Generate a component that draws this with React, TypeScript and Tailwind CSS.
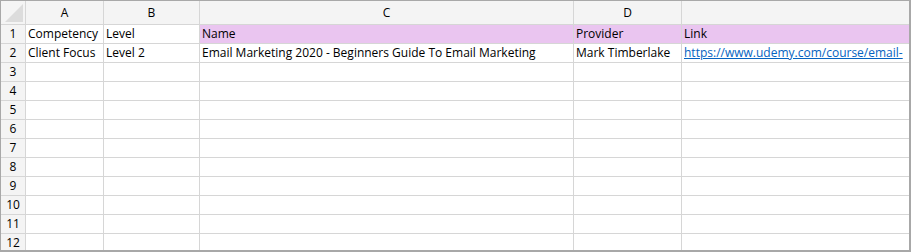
const columns = [
  { key: "A", width: "w-[78px]" },
  { key: "B", width: "w-[96px]" },
  { key: "C", width: "w-[374px]" },
  { key: "D", width: "w-[108px]" },
  { key: "E", width: "flex-1" },
]

type Cell = { text?: string; link?: boolean; fill?: boolean }

const rows: Cell[][] = [
  [
    { text: "Competency" },
    { text: "Level" },
    { text: "Name", fill: true },
    { text: "Provider", fill: true },
    { text: "Link", fill: true },
  ],
  [
    { text: "Client Focus" },
    { text: "Level 2" },
    { text: "Email Marketing 2020 - Beginners Guide To Email Marketing" },
    { text: "Mark Timberlake" },
    { text: "https://www.udemy.com/course/email-", link: true },
  ],
]

export default function App() {
  const allRows: Cell[][] = Array.from({ length: 12 }, (_, i) => rows[i] ?? [{}, {}, {}, {}, {}])

  return (
    <div className="w-[911px] h-[252px] overflow-hidden bg-white border-r-2 border-b-2 border-t border-l border-[#a8a8a8] font-['Open_Sans',sans-serif] text-[12px] text-black">
      {/* column letters */}
      <div className="flex h-[24px] bg-[#f4f4f4]">
        <div className="relative w-[25px] shrink-0 border-r border-b border-[#d6d6d6] overflow-hidden">
          <div className="absolute right-[2px] bottom-[2px] w-0 h-0 border-l-[18px] border-l-transparent border-b-[18px] border-b-[#dcdcdc]" />
        </div>
        {columns.map((c) => (
          <div
            key={c.key}
            className={`${c.width} shrink-0 border-r border-b border-[#d6d6d6] flex items-center justify-center last:border-r-0`}
          >
            {c.key !== "E" ? c.key : ""}
          </div>
        ))}
      </div>

      {allRows.map((row, r) => (
        <div key={r} className="flex h-[19px]">
          <div className="w-[25px] shrink-0 bg-[#f4f4f4] border-r border-b border-[#d6d6d6] flex items-center justify-center leading-none">
            {r + 1}
          </div>
          {columns.map((c, i) => {
            const cell = row[i] ?? {}
            return (
              <div
                key={c.key}
                className={`${c.width} shrink-0 min-w-0 border-r border-b border-[#d6d6d6] last:border-r-0 px-[2px] flex items-center whitespace-nowrap overflow-hidden leading-none ${
                  cell.fill ? "bg-[#eac5f0]" : ""
                }`}
              >
                {cell.link ? (
                  <span className="text-[#0563c1] underline">{cell.text}</span>
                ) : (
                  cell.text
                )}
              </div>
            )
          })}
        </div>
      ))}
    </div>
  )
}
